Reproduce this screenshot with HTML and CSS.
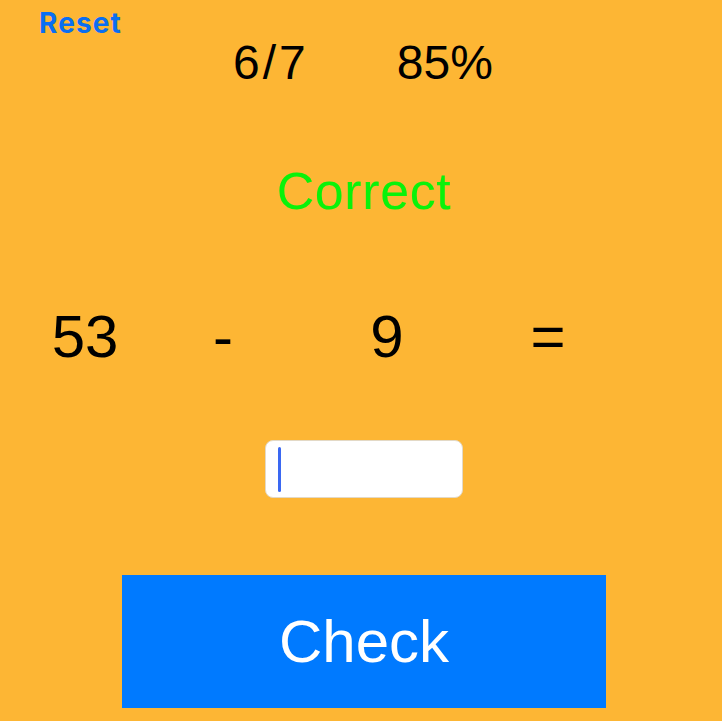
FILE: index.html
```html
<!DOCTYPE html>
<html>
<head>
<meta charset="utf-8">
<link rel="stylesheet" href="styles.css">
</head>
<body>
<main class="screen">
  <div class="top-bar"><span class="reset">Reset</span></div>
  <div class="score">
    <span class="score-count">6/7</span>
    <span class="score-pct">85%</span>
  </div>
  <div class="feedback">Correct</div>
  <div class="equation">
    <span class="term">53</span>
    <span class="term">-</span>
    <span class="term">9</span>
    <span class="term">=</span>
  </div>
  <div class="answer-wrap">
    <div class="answer-box"><span class="caret"></span></div>
  </div>
  <div class="button-wrap">
    <div class="check-btn">Check</div>
  </div>
</main>
</body>
</html>
```
FILE: styles.css
```css
html, body {
  margin: 0;
  padding: 0;
  background: #FDB634;
}
body {
  width: 722px;
  height: 721px;
  overflow: hidden;
  font-family: "Liberation Sans", Arial, sans-serif;
  color: #000;
}
.screen {
  display: flex;
  flex-direction: column;
}
.top-bar {
  margin-top: 9px;
  padding-left: 39px;
  height: 28px;
  line-height: 28px;
}
.reset {
  font-family: Inter, "Liberation Sans", sans-serif;
  font-size: 28px;
  font-weight: 700;
  color: #0A6EF2;
  letter-spacing: 1.1px;
}
.score {
  margin-top: 2px;
  display: flex;
  gap: 88px;
  padding-left: 233px;
  font-size: 48px;
  line-height: 48px;
  height: 48px;
}
.score-count {
  letter-spacing: 3px;
}
.feedback {
  margin-top: 78px;
  padding-left: 6px;
  text-align: center;
  font-size: 52px;
  line-height: 52px;
  height: 52px;
  color: #0AF20A;
  letter-spacing: 0.6px;
}
.equation {
  margin-top: 90px;
  display: grid;
  grid-template-columns: 140px 136px 192px 130px;
  padding-left: 15px;
  font-size: 60px;
  line-height: 60px;
  height: 60px;
}
.term {
  text-align: center;
}
.answer-wrap {
  margin-top: 73px;
  display: flex;
  justify-content: center;
  padding-left: 6px;
}
.answer-box {
  width: 198px;
  height: 58px;
  box-sizing: border-box;
  background: #fff;
  border: 1px solid #e3d9c6;
  border-radius: 8px;
  display: flex;
  align-items: center;
  padding-left: 12px;
}
.caret {
  width: 3px;
  height: 45px;
  border-radius: 2px;
  background: #3A68F2;
}
.button-wrap {
  margin-top: 77px;
  display: flex;
  justify-content: center;
  padding-left: 6px;
}
.check-btn {
  width: 484px;
  height: 133px;
  background: #007AFF;
  color: #fff;
  font-size: 60px;
  line-height: 60px;
  display: flex;
  align-items: center;
  justify-content: center;
}
```
